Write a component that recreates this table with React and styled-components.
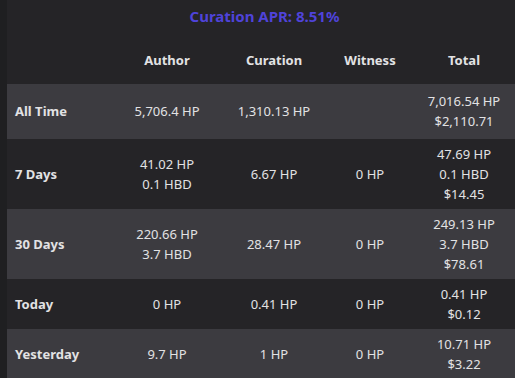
import styled, { createGlobalStyle } from "styled-components";

const GlobalStyle = createGlobalStyle`
  html, body {
    margin: 0;
    padding: 0;
    background: #1f1f21;
    overflow: hidden;
  }
`;

const rows = [
  { label: "All Time", author: ["5,706.4 HP"], curation: ["1,310.13 HP"], witness: [], total: ["7,016.54 HP", "$2,110.71"], striped: true, tall: true },
  { label: "7 Days", author: ["41.02 HP", "0.1 HBD"], curation: ["6.67 HP"], witness: ["0 HP"], total: ["47.69 HP", "0.1 HBD", "$14.45"] },
  { label: "30 Days", author: ["220.66 HP", "3.7 HBD"], curation: ["28.47 HP"], witness: ["0 HP"], total: ["249.13 HP", "3.7 HBD", "$78.61"], striped: true },
  { label: "Today", author: ["0 HP"], curation: ["0.41 HP"], witness: ["0 HP"], total: ["0.41 HP", "$0.12"] },
  { label: "Yesterday", author: ["9.7 HP"], curation: ["1 HP"], witness: ["0 HP"], total: ["10.71 HP", "$3.22"], striped: true },
];

const App = () => {
  return (
    <>
      <GlobalStyle />
      <Panel>
        <Title>Curation APR: 8.51%</Title>
        <Table>
          <HeadRow>
            <HeadCell />
            <HeadCell>Author</HeadCell>
            <HeadCell>Curation</HeadCell>
            <HeadCell>Witness</HeadCell>
            <HeadCell>Total</HeadCell>
          </HeadRow>
          {rows.map((r) => (
            <Row key={r.label} $striped={r.striped} $tall={r.tall}>
              <LabelCell>{r.label}</LabelCell>
              <Cell>{r.author.map((v) => <div key={v}>{v}</div>)}</Cell>
              <Cell>{r.curation.map((v) => <div key={v}>{v}</div>)}</Cell>
              <Cell>{r.witness.map((v) => <div key={v}>{v}</div>)}</Cell>
              <Cell>{r.total.map((v) => <div key={v}>{v}</div>)}</Cell>
            </Row>
          ))}
        </Table>
      </Panel>
    </>
  );
};

export default App;

const Panel = styled.div`
  margin-left: 7px;
  width: 515px;
  height: 378px;
  background: #252427;
  font-family: "Noto Sans", "Open Sans", sans-serif;
  color: #e2e2e4;
  font-size: 13px;
`;

const Title = styled.div`
  height: 36px;
  padding-top: 3px;
  box-sizing: border-box;
  text-align: center;
  font-size: 15px;
  font-weight: 700;
  color: #4f43d9;
  line-height: 26px;
`;

const Table = styled.div`
  display: flex;
  flex-direction: column;
`;

const HeadRow = styled.div`
  display: grid;
  grid-template-columns: 110px 100px 114px 78px 110px;
  height: 48px;
  align-items: center;
`;

const HeadCell = styled.div`
  text-align: center;
  font-weight: 700;
`;

const Row = styled.div`
  display: grid;
  grid-template-columns: 110px 100px 114px 78px 110px;
  align-items: center;
  padding: ${(p) => (p.$tall ? "7px 0 8px" : "5px 0")};
  background: ${(p) => (p.$striped ? "#3c3b40" : "#252427")};
  line-height: 20px;
`;

const LabelCell = styled.div`
  padding-left: 8px;
  font-weight: 700;
`;

const Cell = styled.div`
  text-align: center;
`;
